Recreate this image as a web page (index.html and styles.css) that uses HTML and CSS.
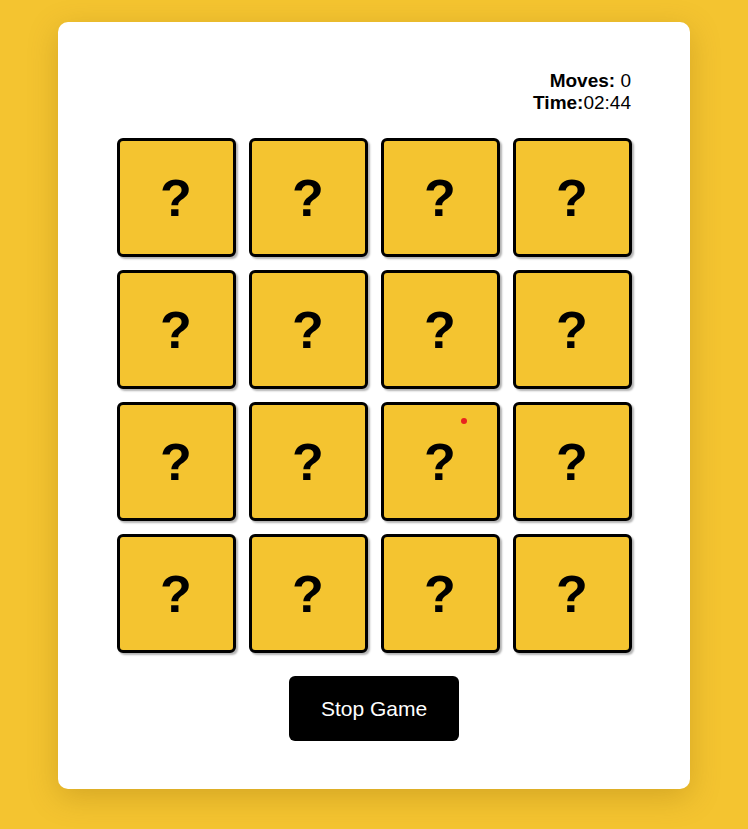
FILE: index.html
```html
<!DOCTYPE html>
<html>
<head>
<meta charset="utf-8">
<link rel="stylesheet" href="styles.css">
</head>
<body>
<div class="card">
  <div class="stats">
    <div><b>Moves:</b> 0</div>
    <div><b>Time:</b>02:44</div>
  </div>
  <div class="grid">
    <div class="tile">?</div><div class="tile">?</div><div class="tile">?</div><div class="tile">?</div>
    <div class="tile">?</div><div class="tile">?</div><div class="tile">?</div><div class="tile">?</div>
    <div class="tile">?</div><div class="tile">?</div><div class="tile">?<span class="dot"></span></div><div class="tile">?</div>
    <div class="tile">?</div><div class="tile">?</div><div class="tile">?</div><div class="tile">?</div>
  </div>
  <button class="stop">Stop Game</button>
</div>
</body>
</html>
```
FILE: styles.css
```css
html, body {
  margin: 0;
  padding: 0;
}
body {
  background: #f4c430;
  font-family: "Liberation Sans", Arial, sans-serif;
  padding-top: 22px;
  height: 829px;
  box-sizing: border-box;
}
.card {
  width: 632px;
  height: 767px;
  box-sizing: border-box;
  margin: 0 auto;
  background: #fff;
  border-radius: 10px;
  box-shadow: 0 8px 30px rgba(120, 80, 0, 0.25);
  padding: 48px 58px 0 58px;
  display: flex;
  flex-direction: column;
  align-items: center;
}
.stats {
  align-self: stretch;
  text-align: right;
  font-size: 19px;
  line-height: 22px;
  color: #000;
  margin-right: 1px;
}
.grid {
  margin-top: 24px;
  display: grid;
  grid-template-columns: repeat(4, 119px);
  grid-auto-rows: 119px;
  gap: 13px;
}
.tile {
  position: relative;
  box-sizing: border-box;
  background: #f4c430;
  border: 3px solid #000;
  border-radius: 6px;
  box-shadow: 2px 2px 2px rgba(0, 0, 0, 0.3);
  display: flex;
  align-items: center;
  justify-content: center;
  font-weight: bold;
  font-size: 52px;
  line-height: 1;
  color: #000;
}
.dot {
  position: absolute;
  left: 77px;
  top: 13px;
  width: 6px;
  height: 6px;
  border-radius: 50%;
  background: #e8231f;
}
.stop {
  margin-top: 23px;
  width: 170px;
  height: 65px;
  background: #000;
  color: #fff;
  border: none;
  border-radius: 6px;
  font-family: "Liberation Sans", Arial, sans-serif;
  font-size: 21px;
}
```
